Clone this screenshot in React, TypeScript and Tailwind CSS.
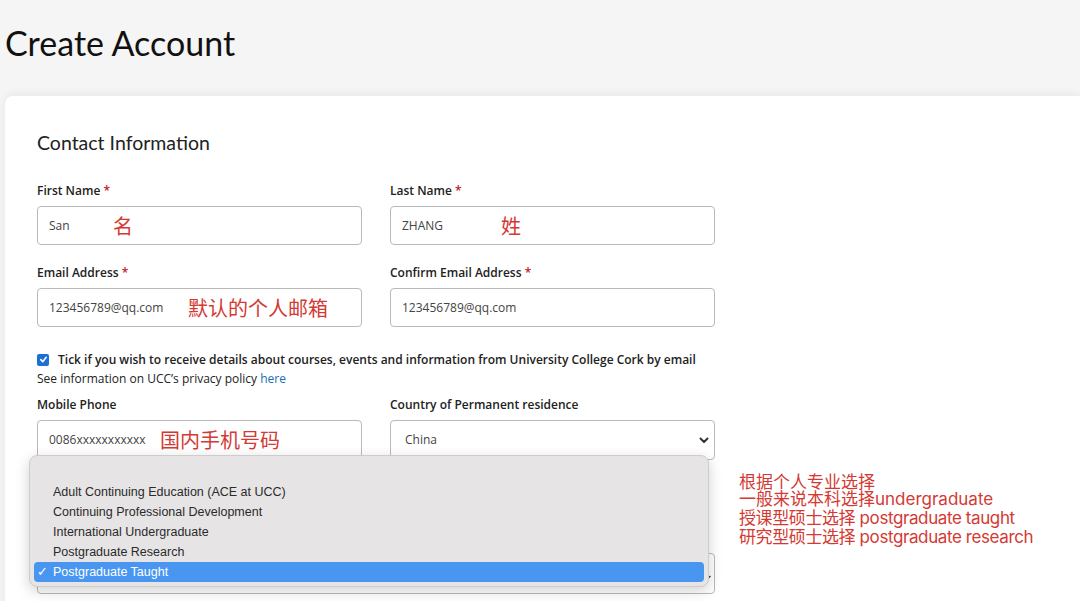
import React from "react";

const RED = "text-[#d33a33]";

function Label({ text, required }: { text: string; required?: boolean }) {
  return (
    <div className="h-[16px] text-[12px] leading-[16px] font-semibold text-[#222]">
      {text}
      {required && <span className="text-[#c4161c]"> *</span>}
    </div>
  );
}

function Field({
  label,
  required,
  value,
  note,
  noteLeft,
}: {
  label: string;
  required?: boolean;
  value: string;
  note?: string;
  noteLeft?: string;
}) {
  return (
    <div className="flex flex-col">
      <Label text={label} required={required} />
      <div className="relative mt-[7px] flex h-[39px] items-center rounded-[4px] border border-[#b9b9b9] bg-white pl-[11px] text-[12px] text-[#444]">
        {value}
        {note && (
          <span
            className={`absolute top-1/2 -translate-y-1/2 whitespace-nowrap font-['Noto_Sans_CJK_SC',sans-serif] text-[20px] leading-[24px] ${RED} ${noteLeft}`}
          >
            {note}
          </span>
        )}
      </div>
    </div>
  );
}

function Chevron() {
  return (
    <svg width="10" height="7" viewBox="0 0 10 7" className="text-[#333]">
      <path d="M1.5 1.5 L5 5 L8.5 1.5" fill="none" stroke="currentColor" strokeWidth="2" strokeLinecap="round" strokeLinejoin="round" />
    </svg>
  );
}

export default function App() {
  const options = [
    "Adult Continuing Education (ACE at UCC)",
    "Continuing Professional Development",
    "International Undergraduate",
    "Postgraduate Research",
    "Postgraduate Taught",
  ];
  return (
    <div className="h-[601px] w-[1080px] overflow-hidden bg-[#f5f5f5] font-['Open_Sans',sans-serif]">
      <h1 className="pl-[5px] pt-[23px] font-['Lato',sans-serif] text-[34px] leading-[40px] text-[#111]">
        Create Account
      </h1>
      <div className="relative ml-[5px] mt-[33px] h-[600px] rounded-tl-[8px] bg-white pl-[32px] pt-[35px] shadow-[0_-2px_8px_rgba(0,0,0,0.06)]">
        <h2 className="font-['Lato',sans-serif] text-[19.5px] leading-[24px] text-[#222]">Contact Information</h2>

        <div className="mt-[28px] grid w-[678px] grid-cols-[325px_325px] gap-x-[28px] gap-y-[20px]">
          <Field label="First Name" required value="San" note="名" noteLeft="left-[75px]" />
          <Field label="Last Name" required value="ZHANG" note="姓" noteLeft="left-[110px]" />
          <Field label="Email Address" required value="123456789@qq.com" note="默认的个人邮箱" noteLeft="left-[150px]" />
          <Field label="Confirm Email Address" required value="123456789@qq.com" />
        </div>

        <div className="mt-[23px] text-[12px] leading-[19px] text-[#222]">
          <div className="flex items-center">
            <div className="flex h-[12px] w-[12px] items-center justify-center rounded-[2px] bg-[#1d6fd6]">
              <svg width="9" height="9" viewBox="0 0 10 10">
                <path d="M2 5.2 L4.2 7.4 L8 2.6" fill="none" stroke="white" strokeWidth="1.8" strokeLinecap="round" strokeLinejoin="round" />
              </svg>
            </div>
            <span className="ml-[9px] font-semibold">
              Tick if you wish to receive details about courses, events and information from University College Cork by email
            </span>
          </div>
          <div>
            See information on UCC’s privacy policy <span className="text-[#1a6db3]">here</span>
          </div>
        </div>

        <div className="mt-[9px] grid w-[678px] grid-cols-[325px_325px] gap-x-[28px]">
          <Field label="Mobile Phone" value="0086xxxxxxxxxxx" note="国内手机号码" noteLeft="left-[122px]" />
          <div className="flex flex-col">
            <Label text="Country of Permanent residence" />
            <div className="mt-[7px] flex h-[40px] items-center justify-between rounded-[4px] border border-[#b9b9b9] bg-white pl-[14px] pr-[5px] text-[12px] text-[#444]">
              <span>China</span>
              <Chevron />
            </div>
          </div>
        </div>

        <div className="mt-[93px] w-[678px]">
          <div className="flex h-[41px] items-center justify-end rounded-[4px] border border-[#b9b9b9] bg-white pr-[3px]">
            <svg width="4" height="8" viewBox="0 0 4 8">
              <path d="M0.5 6 L2 7.5 L3.5 6" fill="none" stroke="#333" strokeWidth="1.2" />
            </svg>
          </div>
        </div>

        {/* native select popup */}
        <div className="absolute left-[24px] top-[359px] h-[132px] w-[680px] rounded-[8px] border border-[#cfcccd] bg-[#e7e4e5] px-[4px] pt-[26px] shadow-[0_4px_14px_rgba(0,0,0,0.18)] font-['Liberation_Sans',sans-serif] text-[12.5px] text-[#2a2a2a]">
          {options.map((o, i) => {
            const sel = i === options.length - 1;
            return (
              <div
                key={o}
                className={`relative h-[20px] pl-[19px] leading-[20px] ${sel ? "rounded-[4px] bg-[#4896f0] text-white" : ""}`}
              >
                {sel && <span className="absolute left-[3px] top-0">✓</span>}
                {o}
              </div>
            );
          })}
        </div>

        {/* annotation */}
        <div
          className={`absolute left-[734px] top-[375px] font-['Inter','Noto_Sans_CJK_SC',sans-serif] text-[17px] leading-[19px] ${RED}`}
        >
          <div className="font-['Noto_Sans_CJK_SC',sans-serif]">根据个人专业选择</div>
          <div>一般来说本科选择undergraduate</div>
          <div className="tracking-[-0.4px]">授课型硕士选择 postgraduate taught</div>
          <div className="tracking-[-0.4px]">研究型硕士选择 postgraduate research</div>
        </div>
      </div>
    </div>
  );
}
